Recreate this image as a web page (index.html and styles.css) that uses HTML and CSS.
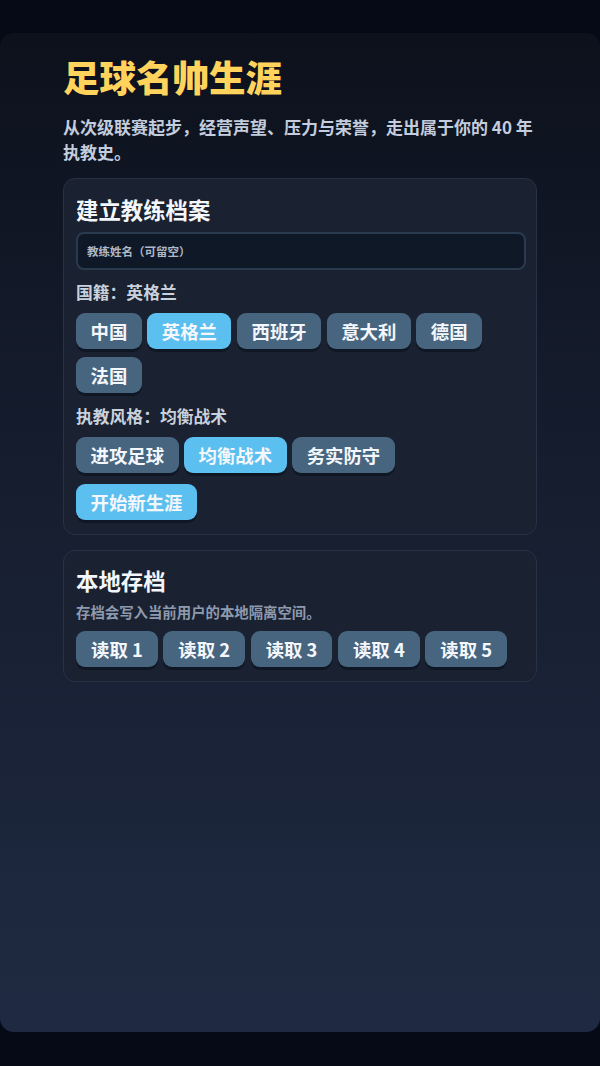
FILE: index.html
```html
<!DOCTYPE html>
<html lang="zh-CN">
<head>
<meta charset="utf-8">
<title>足球名帅生涯</title>
<link rel="stylesheet" href="styles.css">
</head>
<body>
<div class="app">
  <main class="content">
    <h1 class="title">足球名帅生涯</h1>
    <p class="subtitle">从次级联赛起步，经营声望、压力与荣誉，走出属于你的 40 年执教史。</p>

    <section class="card">
      <h2 class="card-title">建立教练档案</h2>
      <input class="name-input" type="text" placeholder="教练姓名（可留空）">
      <div class="label">国籍：英格兰</div>
      <div class="btn-row">
        <button class="btn">中国</button>
        <button class="btn active">英格兰</button>
        <button class="btn">西班牙</button>
        <button class="btn">意大利</button>
        <button class="btn">德国</button>
        <button class="btn">法国</button>
      </div>
      <div class="label label-style">执教风格：均衡战术</div>
      <div class="btn-row">
        <button class="btn">进攻足球</button>
        <button class="btn active">均衡战术</button>
        <button class="btn">务实防守</button>
      </div>
      <div class="btn-row start-row">
        <button class="btn active">开始新生涯</button>
      </div>
    </section>

    <section class="card save-card">
      <h2 class="card-title">本地存档</h2>
      <p class="desc">存档会写入当前用户的本地隔离空间。</p>
      <div class="btn-row">
        <button class="btn">读取 1</button>
        <button class="btn">读取 2</button>
        <button class="btn">读取 3</button>
        <button class="btn">读取 4</button>
        <button class="btn">读取 5</button>
      </div>
    </section>
  </main>
</div>
</body>
</html>
```

FILE: styles.css
```css
* { box-sizing: border-box; }

html, body {
  margin: 0;
  padding: 0;
  background: #050a16;
  font-family: "Noto Sans CJK SC", "Noto Sans", sans-serif;
}

body {
  padding-top: 33px;
  height: 1066px;
  overflow: hidden;
}

.app {
  height: 999px;
  border-radius: 14px;
  background: linear-gradient(180deg, #0c111c 0%, #141b2b 35%, #1f2a42 100%);
}

.content {
  padding: 22px 63px 0;
}

.title {
  margin: 0;
  font-size: 36.5px;
  line-height: 44px;
  font-weight: 900;
  color: #ffd35c;
}

.subtitle {
  margin: 15px 0 0;
  font-size: 17px;
  line-height: 25px;
  font-weight: 700;
  color: #c3cddd;
}

.card {
  margin-top: 14px;
  border: 1px solid #283245;
  border-radius: 12px;
  background: #1a2130;
  padding: 16px 12px 14px;
}

.card-title {
  margin: 0;
  font-size: 22.4px;
  line-height: 29px;
  font-weight: 700;
  color: #f3f6fa;
}

.name-input {
  display: block;
  width: calc(100% + 2px);
  height: 38px;
  margin-top: 8px;
  border: 2px solid #2a3a4f;
  border-radius: 8px;
  background: #0f1826;
  padding: 0 9px;
  font-family: inherit;
  font-size: 11.5px;
  font-weight: 700;
  color: #e6ebf2;
  outline: none;
}

.name-input::placeholder {
  color: #aeb8c6;
}

.label {
  margin-top: 10px;
  font-size: 16.8px;
  line-height: 24px;
  font-weight: 700;
  color: #c9d1dc;
}

.label-style {
  margin-top: 11px;
}

.btn-row {
  display: flex;
  flex-wrap: wrap;
  gap: 8px 5.5px;
  margin-top: 9px;
}

.start-row {
  margin-top: 11px;
}

.btn {
  height: 36px;
  padding: 0 14.5px;
  border: none;
  border-radius: 9px;
  background: #486580;
  color: #f4f7fb;
  font-family: inherit;
  font-size: 18.4px;
  font-weight: 700;
  line-height: 36px;
  box-shadow: 0 3px 0 rgba(10, 16, 28, 0.55);
  cursor: pointer;
}

.btn.active {
  background: #5bbff0;
}

.save-card {
  margin-top: 15px;
  padding-top: 15px;
  padding-bottom: 14px;
}

.save-card .btn {
  padding: 0 15px;
}

.desc {
  margin: 7px 0 0;
  font-size: 14.4px;
  line-height: 20px;
  font-weight: 700;
  color: #8e9aae;
}

.save-card .btn-row {
  margin-top: 9px;
}
```
